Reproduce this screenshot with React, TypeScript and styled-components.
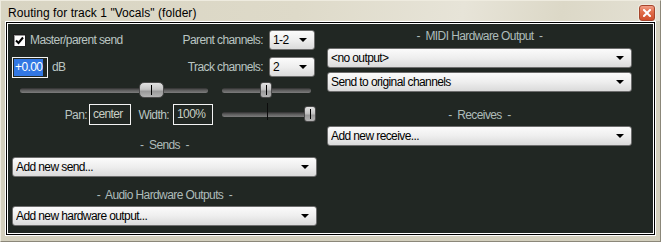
import styled, { createGlobalStyle } from "styled-components";

const GlobalStyle = createGlobalStyle`
	html, body {
		margin: 0;
		padding: 0;
		background: #d3cfbd;
	}
	body {
		font-family: "Liberation Sans", Arial, sans-serif;
	}
`;

const Window = styled.div`
	width: 661px;
	height: 242px;
	box-sizing: border-box;
	border: 1px solid;
	border-color: #eeebdf #8b8779 #8b8779 #eeebdf;
	background: #d3cfbd;
	padding: 0 4px 5px;
	display: flex;
	flex-direction: column;
`;

const TitleBar = styled.div`
	height: 20px;
	flex: none;
	display: flex;
	align-items: flex-start;
	justify-content: space-between;
	margin: 0 -4px;
	padding-left: 7px;
	padding-right: 5px;
	background: linear-gradient(100deg, #d8d4c2 0%, #dedac9 45%, #e7e4d8 70%, #dcd8c7 85%, #e4e1d4 100%);
`;

const Title = styled.span`
	font-size: 12px;
	line-height: 14px;
	padding-top: 5px;
	color: #000;
	letter-spacing: 0.05px;
`;

const CloseButton = styled.div`
	width: 16px;
	height: 16px;
	margin-top: 4px;
	box-sizing: border-box;
	border: 1px solid #a5452c;
	border-radius: 3px;
	background: linear-gradient(180deg, #f2a088 0%, #e2704c 40%, #cf4e2a 100%);
	box-shadow: 0 0 0 1px #f0ece0;
	display: flex;
	align-items: center;
	justify-content: center;
`;

const Panel = styled.div`
	flex: 1;
	border: 1px solid #ffffff;
	box-shadow: inset 0 0 0 1px #000, inset 0 0 0 2px #fff;
	background: #212723;
	display: flex;
	gap: 10px;
	padding: 0 0 0 6px;
	color: #bac5c2;
	font-size: 12px;
	letter-spacing: -0.6px;
`;

const Column = styled.div<{ $top: number; $width: number }>`
	width: ${p => p.$width}px;
	padding-top: ${p => p.$top}px;
	display: flex;
	flex-direction: column;
`;

const Row = styled.div<{ $mt?: number; $h?: number }>`
	display: flex;
	align-items: center;
	height: ${p => p.$h ?? 20}px;
	margin-top: ${p => p.$mt ?? 0}px;
	padding-right: 2px;
`;

const Check = styled.div`
	width: 13px;
	height: 13px;
	box-sizing: border-box;
	margin-left: 1px;
	background: #fff;
	border: 1px solid #1d1d1d;
	box-shadow: inset 1px 1px 0 #9a9a9a;
	display: flex;
	align-items: center;
	justify-content: center;
`;

const Label = styled.span<{ $ml?: number }>`
	margin-left: ${p => p.$ml ?? 0}px;
	white-space: nowrap;
`;

const RightLabel = styled.span<{ $w: number; $pr: number }>`
	width: ${p => p.$w}px;
	padding-right: ${p => p.$pr}px;
	box-sizing: border-box;
	text-align: right;
	white-space: nowrap;
`;

const Spacer = styled.div<{ $w?: number }>`
	${p => (p.$w ? `flex: 0 0 ${p.$w}px;` : "flex: 1;")}
`;

const Select = styled.div<{ $w?: number }>`
	${p => (p.$w ? `width: ${p.$w}px;` : "flex: 1;")}
	height: 20px;
	box-sizing: border-box;
	border: 1px solid #6d6d6d;
	border-radius: 3px;
	background: linear-gradient(180deg, #fbfbfb 0%, #eeeeee 50%, #dadada 100%);
	display: flex;
	align-items: center;
	padding: 0 7px 0 3px;
	color: #000;
	flex-shrink: 0;
`;

const SelectText = styled.span`
	flex: 1;
	white-space: nowrap;
	overflow: hidden;
`;

const Arrow = styled.span`
	width: 0;
	height: 0;
	border-left: 4px solid transparent;
	border-right: 4px solid transparent;
	border-top: 4px solid #000;
`;

const DbBox = styled.div`
	width: 36px;
	height: 21px;
	box-sizing: border-box;
	border: 1px solid #f4f4f4;
	padding: 1px;
	display: flex;
	align-items: stretch;
`;

const Selected = styled.span`
	background: #3277e3;
	color: #fff;
	padding: 0 1px;
	line-height: 17px;
`;

const TextBox = styled.div<{ $w: number }>`
	width: ${p => p.$w}px;
	height: 21px;
	box-sizing: border-box;
	border: 1px solid #f4f4f4;
	padding: 0 3px;
	line-height: 19px;
	color: #c9cfc4;
	white-space: nowrap;
`;

const Track = styled.div<{ $w: number; $ml: number }>`
	position: relative;
	width: ${p => p.$w}px;
	margin-left: ${p => p.$ml}px;
	height: 5px;
	border-radius: 3px;
	background: linear-gradient(180deg, #2e2e2e 0%, #5a5a5a 40%, #7d7d7d 100%);
	flex-shrink: 0;
`;

const Thumb = styled.div<{ $w: number; $left: number }>`
	position: absolute;
	top: -6px;
	left: ${p => p.$left}px;
	width: ${p => p.$w}px;
	height: 16px;
	box-sizing: border-box;
	border: 1px solid #4a4a4a;
	border-radius: ${p => (p.$w > 15 ? 5 : 3)}px;
	background: linear-gradient(180deg, #e2e2e2 0%, #c4c4c4 45%, #9a9a9a 60%, #b4b4b4 100%);
	&::after {
		content: "";
		position: absolute;
		left: 50%;
		top: 2px;
		bottom: 2px;
		width: 1px;
		margin-left: -0.5px;
		background: #000;
	}
`;

const CenterMark = styled.div<{ $left: number }>`
	position: absolute;
	left: ${p => p.$left}px;
	top: -9px;
	width: 1px;
	height: 17px;
	background: #0c0c0c;
`;

const SectionLabel = styled.div<{ $mt: number }>`
	height: 20px;
	margin-top: ${p => p.$mt}px;
	display: flex;
	align-items: center;
	justify-content: center;
	white-space: pre;
	color: #aebcba;
`;

const Dropdown = styled(Select)<{ $mt: number }>`
	margin-top: ${p => p.$mt}px;
	flex: none;
	width: 100%;
`;

function ComboBox({ text, mt, width }: { text: string; mt?: number; width?: number }) {
	if (width) {
		return (
			<Select $w={width}>
				<SelectText>{text}</SelectText>
				<Arrow />
			</Select>
		);
	}
	return (
		<Dropdown $mt={mt ?? 0}>
			<SelectText>{text}</SelectText>
			<Arrow />
		</Dropdown>
	);
}

export default function App() {
	return (
		<>
			<GlobalStyle />
			<Window>
				<TitleBar>
					<Title>Routing for track 1 "Vocals" (folder)</Title>
					<CloseButton>
						<svg width="8" height="8" viewBox="0 0 8 8">
							<path d="M1 1 L7 7 M7 1 L1 7" stroke="#fff" strokeWidth="2" strokeLinecap="square" />
						</svg>
					</CloseButton>
				</TitleBar>
				<Panel>
					<Column $top={8} $width={305}>
						<Row>
							<Check>
								<svg width="9" height="9" viewBox="0 0 9 9">
									<path d="M1 4.5 L3.5 7 L8 1.5" fill="none" stroke="#000" strokeWidth="2" />
								</svg>
							</Check>
							<Label $ml={4}>Master/parent send</Label>
							<Spacer />
							<Label>Parent channels:</Label>
							<Spacer $w={6} />
							<ComboBox text="1-2" width={46} />
						</Row>
						<Row $mt={7}>
							<DbBox>
								<Selected>+0.00</Selected>
							</DbBox>
							<Label $ml={4}>dB</Label>
							<Spacer />
							<Label>Track channels:</Label>
							<Spacer $w={6} />
							<ComboBox text="2" width={46} />
						</Row>
						<Row $mt={5} $h={16}>
							<Track $w={188} $ml={8}>
								<Thumb $w={25} $left={119} />
							</Track>
							<Track $w={89} $ml={14}>
								<Thumb $w={12} $left={38} />
							</Track>
						</Row>
						<Row $mt={6} $h={21}>
							<RightLabel $w={77} $pr={2}>Pan:</RightLabel>
							<TextBox $w={42}>center</TextBox>
							<RightLabel $w={42} $pr={4}>Width:</RightLabel>
							<TextBox $w={40}>100%</TextBox>
							<Track $w={93} $ml={9}>
								<CenterMark $left={45} />
								<Thumb $w={12} $left={82} />
							</Track>
						</Row>
						<SectionLabel $mt={10}>-  Sends  -</SectionLabel>
						<ComboBox text="Add new send..." mt={2} />
						<SectionLabel $mt={8}>-  Audio Hardware Outputs  -</SectionLabel>
						<ComboBox text="Add new hardware output..." mt={1} />
					</Column>
					<Column $top={4} $width={305}>
						<SectionLabel $mt={0}>-  MIDI Hardware Output  -</SectionLabel>
						<ComboBox text="<no output>" mt={2} />
						<ComboBox text="Send to original channels" mt={4} />
						<SectionLabel $mt={13}>-  Receives  -</SectionLabel>
						<ComboBox text="Add new receive..." mt={1} />
					</Column>
				</Panel>
			</Window>
		</>
	);
}
